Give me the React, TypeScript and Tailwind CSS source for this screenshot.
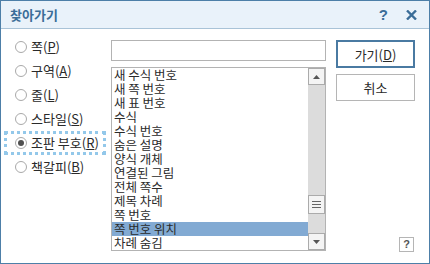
import React from "react";

const items = [
  "새 수식 번호",
  "새 쪽 번호",
  "새 표 번호",
  "수식",
  "수식 번호",
  "숨은 설명",
  "양식 개체",
  "연결된 그림",
  "전체 쪽수",
  "제목 차례",
  "쪽 번호",
  "쪽 번호 위치",
  "차례 숨김",
];

const radios: { label: string; key: string; checked?: boolean }[] = [
  { label: "쪽", key: "P" },
  { label: "구역", key: "A" },
  { label: "줄", key: "L" },
  { label: "스타일", key: "S" },
  { label: "조판 부호", key: "R", checked: true },
  { label: "책갈피", key: "B" },
];

const font = { fontFamily: '"Noto Sans CJK KR", "Noto Sans", sans-serif' };

export default function App() {
  return (
    <div
      className="w-[430px] h-[264px] border border-[#4d7fa8] bg-white flex flex-col overflow-hidden text-[#2a2a2a]"
      style={font}
    >
      {/* Title bar */}
      <div className="h-[28px] shrink-0 bg-[#e9f2fa] border-b border-[#a9c3d7] flex items-center pl-[9px] pr-[12px]">
        <span className="text-[13px] font-bold text-[#3a6d98] leading-none">찾아가기</span>
        <div className="ml-auto flex items-center gap-[18px]">
          <span
            className="text-[15px] font-bold text-[#3a6d98] leading-none"
            style={{ fontFamily: '"Liberation Sans", sans-serif' }}
          >
            ?
          </span>
          <svg width="11" height="10" viewBox="0 0 11 10">
            <path d="M1 0.5 L10 9.5 M10 0.5 L1 9.5" stroke="#3a6d98" strokeWidth="2.4" />
          </svg>
        </div>
      </div>

      {/* Body */}
      <div className="flex flex-1 min-h-0">
        {/* Radio column */}
        <div className="ml-[3px] mt-[6px] w-[102px] flex flex-col">
          {radios.map((r) => (
            <div
              key={r.key}
              className={`h-[24px] flex items-center pl-[8px] border-[3px] ${
                r.checked ? "border-dotted border-[#93c8ea]" : "border-transparent"
              }`}
            >
              <span className="w-[12px] h-[12px] rounded-full border border-[#a9a9a9] bg-white flex items-center justify-center shrink-0">
                {r.checked && <span className="w-[6px] h-[6px] rounded-full bg-[#505050]" />}
              </span>
              <span className="ml-[4px] text-[13px] leading-[16px] whitespace-nowrap">
                {r.label}(<span className="underline underline-offset-1">{r.key}</span>)
              </span>
            </div>
          ))}
        </div>

        {/* List column */}
        <div className="ml-[5px] mt-[11px] w-[215px] flex flex-col">
          <div className="h-[21px] border border-[#b3b3b3] bg-white" />
          <div className="mt-[6px] h-[184px] border border-[#b3b3b3] bg-white flex">
            <div className="flex-1 flex flex-col">
              {items.map((it, i) => (
                <div
                  key={it}
                  className={`h-[14px] pl-[2px] text-[12.5px] leading-[14px] whitespace-nowrap ${
                    i === 11 ? "bg-[#82aad3]" : ""
                  }`}
                >
                  {it}
                </div>
              ))}
            </div>
            <div className="w-[17px] bg-[#dcdcdc] flex flex-col">
              <div className="h-[17px] border border-[#ababab] bg-[#f4f4f4] flex items-center justify-center">
                <svg width="7" height="4" viewBox="0 0 7 4">
                  <path d="M0 4 L3.5 0 L7 4 Z" fill="#555" />
                </svg>
              </div>
              <div className="h-[110px]" />
              <div className="h-[19px] border border-[#ababab] bg-[#f4f4f4] flex flex-col items-center justify-center gap-[2px]">
                <div className="w-[9px] h-px bg-[#666]" />
                <div className="w-[9px] h-px bg-[#666]" />
                <div className="w-[9px] h-px bg-[#666]" />
              </div>
              <div className="flex-1" />
              <div className="h-[17px] border border-[#ababab] bg-[#f4f4f4] flex items-center justify-center">
                <svg width="7" height="4" viewBox="0 0 7 4">
                  <path d="M0 0 L3.5 4 L7 0 Z" fill="#555" />
                </svg>
              </div>
            </div>
          </div>
        </div>

        {/* Buttons column */}
        <div className="ml-[10px] mt-[11px] w-[79px] flex flex-col">
          <div className="h-[28px] border-2 border-[#4a7aa2] bg-white flex items-center justify-center text-[13px] leading-none">
            가기(<span className="underline underline-offset-1">D</span>)
          </div>
          <div className="mt-[6px] h-[27px] border border-[#b5b5b5] bg-white flex items-center justify-center text-[13px] leading-none">
            취소
          </div>
          <div className="mt-auto mb-[11px] self-end mr-[1px] w-[15px] h-[15px] border border-[#b5b5b5] bg-white flex items-center justify-center">
            <span
              className="text-[11px] font-bold text-[#555] leading-none"
              style={{ fontFamily: '"Liberation Sans", sans-serif' }}
            >
              ?
            </span>
          </div>
        </div>
      </div>
    </div>
  );
}
